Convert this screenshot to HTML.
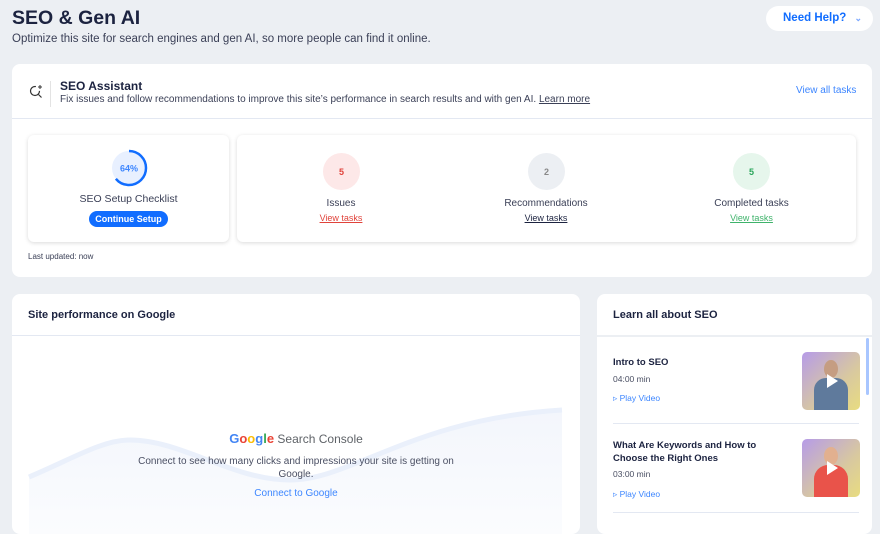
<!DOCTYPE html>
<html><head><meta charset="utf-8"><style>
*{box-sizing:border-box;margin:0;padding:0}
body{width:880px;height:517px;overflow:hidden;background:#eceff3;font-family:"Liberation Sans",sans-serif;color:#1c2340;position:relative}
.a{position:absolute}
.card{position:absolute;background:#fff;border-radius:8px}
.c{text-align:center}
.circ{position:absolute;width:37px;height:37px;border-radius:50%;font-size:9px;font-weight:bold;display:flex;align-items:center;justify-content:center}
.lk{font-size:9px;text-decoration:underline}
</style></head><body>
<div class="a" style="left:12px;top:7px;font-size:19.5px;font-weight:bold;color:#1c2340">SEO &amp; Gen AI</div>
<div class="a" style="left:12px;top:33px;font-size:11.5px;color:#3b4057">Optimize this site for search engines and gen AI, so more people can find it online.</div>
<div class="a" style="left:766px;top:6px;width:107px;height:25px;background:#fff;border-radius:13px;color:#116dff;font-size:11.5px;font-weight:bold;padding:6px 0 0 17px">Need Help? <span style="font-size:9px;color:#7aa7ff;margin-left:5px">⌄</span></div>

<div class="card" style="left:12px;top:64px;width:860px;height:213px">
 <div class="a" style="left:0;top:54px;width:860px;height:1px;background:#e3e8f2"></div>
 <svg class="a" style="left:17px;top:20px" width="14" height="14" viewBox="0 0 14 14"><circle cx="6" cy="7" r="4.5" fill="none" stroke="#333" stroke-width="1.2" stroke-dasharray="22 6"/><path d="M9.5 10.5 L12.5 13.5" stroke="#333" stroke-width="1.2"/><path d="M11 1v4M9 3h4" stroke="#333" stroke-width="1"/></svg>
 <div class="a" style="left:38px;top:17px;width:1px;height:26px;background:#e3e3e3"></div>
 <div class="a" style="left:48px;top:15px;font-size:12px;font-weight:bold">SEO Assistant</div>
 <div class="a" style="left:48px;top:30px;font-size:10px;color:#3b4057">Fix issues and follow recommendations to improve this site’s performance in search results and with gen AI. <span style="text-decoration:underline">Learn more</span></div>
 <div class="a" style="left:784px;top:21px;font-size:10px;color:#3d86ff">View all tasks</div>

 <div class="a" style="left:16px;top:71px;width:201px;height:107px;border-radius:6px;box-shadow:0 1px 4px rgba(0,0,0,.15);background:#fff">
  <svg class="a" style="left:81px;top:13px" width="40" height="40" viewBox="0 0 40 40"><circle cx="20" cy="20" r="17" fill="#e8f0ff"/><circle cx="20" cy="20" r="17" fill="none" stroke="#116dff" stroke-width="2.5" stroke-dasharray="68.3 106.8" transform="rotate(-90 20 20)"/><text x="20" y="23.5" text-anchor="middle" font-size="9" font-weight="bold" fill="#3d86ff" font-family="Liberation Sans">64%</text></svg>
  <div class="a c" style="left:0;width:201px;top:58px;font-size:10.5px;color:#3b4057">SEO Setup Checklist</div>
  <div class="a" style="left:61px;top:76px;width:79px;height:16px;border-radius:8px;background:#116dff;color:#fff;font-size:9px;font-weight:bold;text-align:center;line-height:16px">Continue Setup</div>
 </div>
 <div class="a" style="left:225px;top:71px;width:619px;height:107px;border-radius:6px;box-shadow:0 1px 4px rgba(0,0,0,.15);background:#fff">
  <div class="circ" style="left:86px;top:18px;background:#fde8e8;color:#e0433b">5</div>
  <div class="a c" style="left:54px;width:100px;top:63px;font-size:10px;color:#3b4057">Issues</div>
  <div class="a c lk" style="left:54px;width:100px;top:78px;color:#e0433b">View tasks</div>
  <div class="circ" style="left:291px;top:18px;background:#eceff3;color:#888">2</div>
  <div class="a c" style="left:249px;width:120px;top:63px;font-size:10px;color:#3b4057">Recommendations</div>
  <div class="a c lk" style="left:259px;width:100px;top:78px;color:#1c2340">View tasks</div>
  <div class="circ" style="left:496px;top:18px;background:#e6f6ec;color:#2aa55b">5</div>
  <div class="a c" style="left:454px;width:121px;top:63px;font-size:10px;color:#3b4057">Completed tasks</div>
  <div class="a c lk" style="left:464px;width:101px;top:78px;color:#3fb36b">View tasks</div>
 </div>
 <div class="a" style="left:16px;top:188px;font-size:8px;color:#3b4057">Last updated: now</div>
</div>

<div class="card" style="left:12px;top:294px;width:568px;height:240px">
 <div class="a" style="left:16px;top:15px;font-size:11px;font-weight:bold">Site performance on Google</div>
 <div class="a" style="left:0;top:41px;width:568px;height:1px;background:#e3e8f2"></div>
 <svg class="a" style="left:0;top:0" width="568" height="240" viewBox="0 0 568 240"><defs><linearGradient id="g" x1="0" y1="0" x2="0" y2="1"><stop offset="0" stop-color="#f3f6fc"/><stop offset="1" stop-color="#fbfcfe"/></linearGradient></defs><path d="M17 183 C60 165 90 146 118 146 C170 146 220 186 278 186 C340 186 400 125 550 116 V240 H17Z" fill="url(#g)"/><path d="M17 183 C60 165 90 146 118 146 C170 146 220 186 278 186 C340 186 400 125 550 116" fill="none" stroke="#eaf0fb" stroke-width="5"/></svg>
 <div class="a c" style="left:0;width:568px;top:137px;font-size:12px;color:#5f6368"><span style="font-weight:bold;font-size:13px"><span style="color:#4285f4">G</span><span style="color:#ea4335">o</span><span style="color:#fbbc05">o</span><span style="color:#4285f4">g</span><span style="color:#34a853">l</span><span style="color:#ea4335">e</span></span> Search Console</div>
 <div class="a c" style="left:114px;width:340px;top:161px;font-size:10px;line-height:13px;color:#4a4f63">Connect to see how many clicks and impressions your site is getting on Google.</div>
 <div class="a c" style="left:0;width:568px;top:194px;font-size:10px;color:#3d86ff">Connect to Google</div>
</div>

<div class="card" style="left:597px;top:294px;width:275px;height:240px">
 <div class="a" style="left:16px;top:15px;font-size:11px;font-weight:bold">Learn all about SEO</div>
 <div class="a" style="left:0;top:41px;width:275px;height:2px;background:#eceff3"></div>
 <div class="a" style="left:269px;top:44px;width:3px;height:57px;border-radius:2px;background:#a8c6ff"></div>
 <div class="a" style="left:16px;top:63px;font-size:9.5px;font-weight:bold">Intro to SEO</div>
 <div class="a" style="left:16px;top:80px;font-size:8.5px;color:#4a4f63">04:00 min</div>
 <div class="a" style="left:16px;top:99px;font-size:8.5px;color:#3d86ff">▹ Play Video</div>
 <div class="a" style="left:205px;top:58px;width:58px;height:58px;border-radius:5px;overflow:hidden;background:linear-gradient(135deg,#b69be8,#d8c8a0 60%,#e8dc80)"><div class="a" style="left:12px;top:26px;width:34px;height:32px;border-radius:12px 12px 0 0;background:#5f7a9c"></div><div class="a" style="left:22px;top:8px;width:14px;height:18px;border-radius:50%;background:#c59d82"></div><div class="a" style="left:25px;top:22px;border-left:11px solid #fff;border-top:7px solid transparent;border-bottom:7px solid transparent"></div></div>
 <div class="a" style="left:16px;top:129px;width:246px;height:1px;background:#e3e8f2"></div>
 <div class="a" style="left:16px;top:146px;font-size:9.5px;font-weight:bold;line-height:12.5px;width:170px">What Are Keywords and How to Choose the Right Ones</div>
 <div class="a" style="left:16px;top:175px;font-size:8.5px;color:#4a4f63">03:00 min</div>
 <div class="a" style="left:16px;top:195px;font-size:8.5px;color:#3d86ff">▹ Play Video</div>
 <div class="a" style="left:205px;top:145px;width:58px;height:58px;border-radius:5px;overflow:hidden;background:linear-gradient(135deg,#b69be8,#d8c8a0 60%,#e8dc80)"><div class="a" style="left:12px;top:26px;width:34px;height:32px;border-radius:14px 14px 0 0;background:#e9534a"></div><div class="a" style="left:22px;top:8px;width:14px;height:18px;border-radius:50%;background:#e2b08f"></div><div class="a" style="left:25px;top:22px;border-left:11px solid #fff;border-top:7px solid transparent;border-bottom:7px solid transparent"></div></div>
 <div class="a" style="left:16px;top:218px;width:246px;height:1px;background:#e3e8f2"></div>
</div>
</body></html>
